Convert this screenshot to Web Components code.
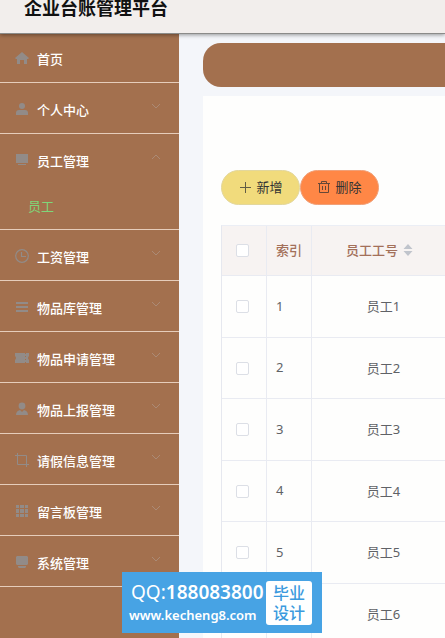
<!DOCTYPE html>
<html lang="zh-CN">
<head>
<meta charset="utf-8">
<meta name="viewport" content="width=device-width, initial-scale=1">
<title>企业台账管理平台</title>
<style>
  body {
    margin: 0;
    height: 100vh;
    overflow: hidden;
    background: #f4f6fa;
    color: #606266;
    font-family: "Noto Sans", "Noto Sans CJK SC", sans-serif;
    font-size: 13px;
  }
</style>
</head>
<body>
<app-shell>
  <app-header slot="header">企业台账管理平台</app-header>

  <side-menu slot="aside">
    <menu-item icon="home" plain>首页</menu-item>
    <menu-item icon="user">个人中心</menu-item>
    <menu-item icon="platform" open>员工管理<a slot="sub" href="#staff">员工</a></menu-item>
    <menu-item icon="time">工资管理</menu-item>
    <menu-item icon="list">物品库管理</menu-item>
    <menu-item icon="ticket">物品申请管理</menu-item>
    <menu-item icon="custom">物品上报管理</menu-item>
    <menu-item icon="crop">请假信息管理</menu-item>
    <menu-item icon="grid">留言板管理</menu-item>
    <menu-item icon="system">系统管理</menu-item>
  </side-menu>

  <bread-bar></bread-bar>
  <content-card>
    <pill-button slot="tools" icon="plus" type="add">新增</pill-button>
    <pill-button slot="tools" icon="trash" type="delete">删除</pill-button>
    <staff-table rows="6"></staff-table>
  </content-card>
</app-shell>
<contact-badge></contact-badge>

<script>
const icons = {
  home: '<path fill="currentColor" d="M7 1 0 7l1 1h1v5h3V9h4v4h3V8h1l1-1z"/>',
  user: '<circle cx="7" cy="4" r="3" fill="currentColor"/><path fill="currentColor" d="M1 13v-2q0-3 3-3h6q3 0 3 3v2z"/>',
  platform: '<path fill="currentColor" d="M1 1h12v9H1zM3 11h8v1H3z"/>',
  time: '<g fill="none" stroke="currentColor" stroke-width="1.200"><circle cx="7" cy="7" r="6.300"/><path d="M6.500 3v4.500H11"/></g>',
  list: '<path fill="currentColor" d="M1 2h12v2H1zM1 6h12v2H1zM1 10h12v2H1z"/>',
  ticket: '<path fill="currentColor" d="M0 2h10v1h1V2h3v3q-2 2 0 4v3h-3v-1h-1v1H0V9q2-2 0-4zM10 5v1h1V5zM10 8v1h1V8z"/>',
  custom: '<circle cx="7" cy="4" r="3.400" fill="currentColor"/><path fill="currentColor" d="M1 13q0-4 4-5l2 2 2-2q4 1 4 5z"/>',
  crop: '<path fill="none" stroke="currentColor" d="M0 2.500h11.500V14M2.500 0v11.500H14"/>',
  grid: '<path fill="currentColor" d="M1 1h3v3H1zM5 1h4v3H5zM10 1h3v3h-3zM1 5h3v4H1zM5 5h4v4H5zM10 5h3v4h-3zM1 10h3v3H1zM5 10h4v3H5zM10 10h3v3h-3z"/>',
  system: '<path fill="currentColor" d="M2 1h10l1 1v7l-1 1H2L1 9V2zM3 11h8v1l-1 1H4l-1-1z"/>',
  plus: '<path fill="none" stroke="currentColor" d="M7.500 2v11M2 7.500h11"/>',
  trash: '<path fill="none" stroke="currentColor" d="M1 3.500h12M4.500 3V1.500h5V3M2.500 4v8.500h9V4M5.500 6v4M8.500 6v4"/>',
  arrow: '<path fill="none" stroke="currentColor" d="m3 5 4 4 4-4"/>'
};

function icon(name) {
  return `<svg width="14" height="14" viewBox="0 0 14 14" aria-hidden="true">${icons[name] || ''}</svg>`;
}

class AppShell extends HTMLElement {
  constructor() {
    super();
    this.attachShadow({ mode: 'open' });
  }

  connectedCallback() {
    this.shadowRoot.innerHTML = `
      <style>
        :host { display: flex; flex-direction: column; height: 100vh; }
        .body { display: flex; flex: 1; min-height: 0; }
        main {
          flex: 1;
          min-width: 0;
          display: flex;
          flex-direction: column;
          gap: 9px;
          padding: 9px 0 0 24px;
          overflow: hidden;
        }
      </style>
      <slot name="header"></slot>
      <div class="body">
        <slot name="aside"></slot>
        <main><slot></slot></main>
      </div>
    `;
  }
}

class AppHeader extends HTMLElement {
  constructor() {
    super();
    this.attachShadow({ mode: 'open' });
  }

  connectedCallback() {
    this.shadowRoot.innerHTML = `
      <style>
        :host {
          display: block;
          position: relative;
          padding: 0 24px 17px;
          background: #f2eeec;
          border-bottom: 1px solid #8b8b89;
          box-shadow: 0 1px 4px rgba(0, 0, 0, .4);
        }
        h1 { margin: 0; font-size: 18px; line-height: 16px; color: #111; }
      </style>
      <h1><slot></slot></h1>
    `;
  }
}

class SideMenu extends HTMLElement {
  constructor() {
    super();
    this.attachShadow({ mode: 'open' });
  }

  connectedCallback() {
    this.shadowRoot.innerHTML = `
      <style>
        :host { display: block; flex: 0 0 179px; background: #a3704e; }
      </style>
      <nav><slot></slot></nav>
    `;
  }
}

class MenuItem extends HTMLElement {
  constructor() {
    super();
    this.attachShadow({ mode: 'open' });
  }

  connectedCallback() {
    const plain = this.hasAttribute('plain');
    const open = this.hasAttribute('open');
    this.shadowRoot.innerHTML = `
      <style>
        :host { display: block; border-bottom: 1px solid #e6cdbb; }
        button {
          display: flex;
          align-items: center;
          gap: 8px;
          width: 100%;
          height: 50px;
          padding: 2px 16px 0 15px;
          border: 0;
          background: none;
          color: #fff;
          font: inherit;
          text-align: left;
          cursor: pointer;
        }
        :host([plain]) button { height: 48px; padding-top: 0; }
        svg { flex: none; color: #928b88; }
        span { flex: 1; font-weight: 500; }
        .arrow { display: flex; padding-bottom: 6px; }
        .arrow svg { color: #ab8a75; }
        :host([open]) .arrow svg { transform: rotate(180deg); }
        ::slotted(a) {
          display: block;
          padding-left: 28px;
          line-height: 45px;
          color: #7fd67a;
          text-decoration: none;
        }
      </style>
      <button type="button">
        ${icon(this.getAttribute('icon'))}
        <span><slot></slot></span>
        ${plain ? '' : `<i class="arrow">${icon('arrow')}</i>`}
      </button>
      ${open ? '<slot name="sub"></slot>' : ''}
    `;
  }
}

class BreadBar extends HTMLElement {
  constructor() {
    super();
    this.attachShadow({ mode: 'open' });
  }

  connectedCallback() {
    this.shadowRoot.innerHTML = `
      <style>
        :host {
          display: block;
          flex: none;
          height: 44px;
          background: #a3704e;
          border-radius: 18px 0 0 18px;
        }
      </style>
    `;
  }
}

class ContentCard extends HTMLElement {
  constructor() {
    super();
    this.attachShadow({ mode: 'open' });
  }

  connectedCallback() {
    this.shadowRoot.innerHTML = `
      <style>
        :host {
          display: flex;
          flex-direction: column;
          flex: 1 0 auto;
          gap: 20px;
          padding: 74px 0 0 18px;
          background: #fefefd;
        }
        .tools { display: flex; }
      </style>
      <div class="tools"><slot name="tools"></slot></div>
      <slot></slot>
    `;
  }
}

class PillButton extends HTMLElement {
  constructor() {
    super();
    this.attachShadow({ mode: 'open' });
  }

  connectedCallback() {
    this.shadowRoot.innerHTML = `
      <style>
        :host { display: block; }
        button {
          display: flex;
          align-items: center;
          justify-content: center;
          gap: 4px;
          width: 79px;
          height: 35px;
          padding: 0 0 2px;
          border: 1px solid #e3d79c;
          border-radius: 18px;
          background: #f1db7c;
          color: #333;
          font: inherit;
          cursor: pointer;
        }
        :host([type="delete"]) button { background: #ff8746; border-color: #f0a078; }
        svg { opacity: .75; }
      </style>
      <button type="button">${icon(this.getAttribute('icon'))}<span><slot></slot></span></button>
    `;
  }
}

class StaffTable extends HTMLElement {
  constructor() {
    super();
    this.attachShadow({ mode: 'open' });
  }

  connectedCallback() {
    let body = '';
    for (let i = 1; i <= Number(this.getAttribute('rows')); i++) {
      body += `
        <tr>
          <td class="check"><input type="checkbox" aria-label="员工${i}"></td>
          <td class="index">${i}</td>
          <td>员工${i}</td>
        </tr>`;
    }

    this.shadowRoot.innerHTML = `
      <style>
        :host { display: block; overflow: hidden; }
        table {
          width: 235px;
          table-layout: fixed;
          border-collapse: separate;
          border-spacing: 0;
          border-top: 1px solid #ebeef5;
          border-left: 1px solid #e6e8ef;
        }
        .narrow { width: 45px; }
        th, td {
          box-sizing: border-box;
          height: 62px;
          padding: 0 0 2px;
          border-right: 1px solid #e9ebf2;
          border-bottom: 1px solid #e9ebf2;
          text-align: center;
        }
        tr:nth-child(even) td { height: 61px; }
        th {
          height: 50px;
          background: #f7f3f2;
          color: #a3705a;
          font-weight: 500;
        }
        .check { padding: 0 4px 0 0; }
        .index { padding-left: 9px; text-align: left; }
        input {
          appearance: none;
          display: block;
          width: 13px;
          height: 13px;
          margin: 0 auto;
          border: 1px solid #dcdfe6;
          border-radius: 2px;
          background: #fff;
        }
        .sort {
          display: inline-flex;
          align-items: center;
          gap: 5px;
          padding: 0 8px 0 0;
          border: 0;
          background: none;
          color: inherit;
          font: inherit;
        }
        .sort svg { color: #c0c4cc; }
      </style>
      <table>
        <colgroup><col class="narrow"><col class="narrow"><col></colgroup>
        <thead>
          <tr>
            <th class="check"><input type="checkbox" aria-label="全选"></th>
            <th>索引</th>
            <th>
              <button class="sort" type="button">员工工号
                <svg width="10" height="12" viewBox="0 0 10 12" aria-hidden="true">
                  <path fill="currentColor" d="m5 0 4.500 5h-9zM5 12 .5 7h9z"/>
                </svg>
              </button>
            </th>
          </tr>
        </thead>
        <tbody>${body}</tbody>
      </table>
    `;
  }
}

class ContactBadge extends HTMLElement {
  constructor() {
    super();
    this.attachShadow({ mode: 'open' });
  }

  connectedCallback() {
    this.shadowRoot.innerHTML = `
      <style>
        /* floats over the page, near the bottom edge */
        :host {
          position: fixed;
          left: 122px;
          bottom: 5px;
          display: flex;
          align-items: center;
          box-sizing: border-box;
          width: 200px;
          height: 61px;
          padding: 0 10px 0 7px;
          background: #47a3e4;
          color: #fff;
        }
        .lines { flex: 1; white-space: nowrap; }
        .qq { padding-left: 2px; font-size: 19px; line-height: 24px; }
        .qq b { font-weight: 600; }
        a {
          display: block;
          color: inherit;
          font-size: 13px;
          font-weight: 600;
          line-height: 22px;
          text-decoration: none;
        }
        .tag {
          width: 46px;
          padding: 2px 0;
          border-radius: 3px;
          background: #fff;
          color: #3b9ade;
          font-size: 16px;
          font-weight: 500;
          line-height: 20px;
          text-align: center;
        }
      </style>
      <div class="lines">
        <div class="qq">QQ:<b>188083800</b></div>
        <a href="#contact">www.kecheng8.com</a>
      </div>
      <div class="tag">毕业<br>设计</div>
    `;
  }
}

customElements.define('app-shell', AppShell);
customElements.define('app-header', AppHeader);
customElements.define('side-menu', SideMenu);
customElements.define('menu-item', MenuItem);
customElements.define('bread-bar', BreadBar);
customElements.define('content-card', ContentCard);
customElements.define('pill-button', PillButton);
customElements.define('staff-table', StaffTable);
customElements.define('contact-badge', ContactBadge);
</script>
</body>
</html>
